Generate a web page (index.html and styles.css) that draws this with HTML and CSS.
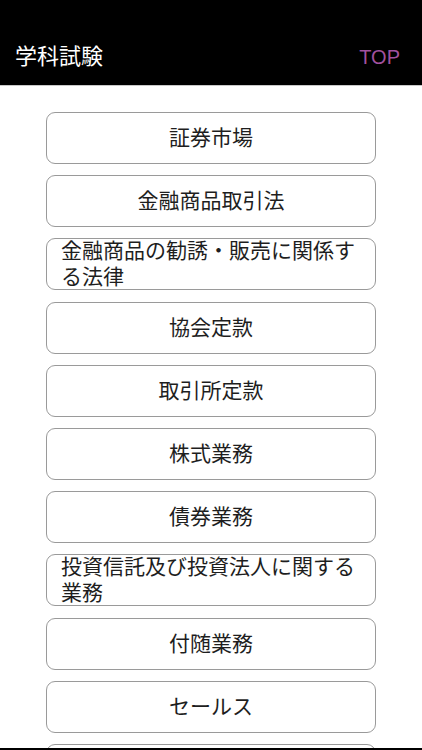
FILE: index.html
```html
<!DOCTYPE html>
<html lang="ja">
<head>
<meta charset="utf-8">
<title>学科試験</title>
<link rel="stylesheet" href="styles.css">
</head>
<body>
<header class="nav">
  <h1 class="nav-title">学科試験</h1>
  <a class="nav-top" href="#">TOP</a>
</header>
<main class="list">
  <button class="item"><span>証券市場</span></button>
  <button class="item"><span>金融商品取引法</span></button>
  <button class="item"><span>金融商品の勧誘・販売に関係する法律</span></button>
  <button class="item"><span>協会定款</span></button>
  <button class="item"><span>取引所定款</span></button>
  <button class="item"><span>株式業務</span></button>
  <button class="item"><span>債券業務</span></button>
  <button class="item"><span>投資信託及び投資法人に関する業務</span></button>
  <button class="item"><span>付随業務</span></button>
  <button class="item"><span>セールス</span></button>
  <button class="item" aria-label="次の項目"></button>
</main>
<div class="bottom-bar"></div>
</body>
</html>
```

FILE: styles.css
```css
html, body {
  margin: 0;
  padding: 0;
  background: #ffffff;
  font-family: "Noto Sans CJK JP", "Noto Sans", sans-serif;
}

body {
  height: 750px;
  overflow: hidden;
}

.nav {
  box-sizing: border-box;
  height: 86px;
  background: #000000;
  border-bottom: 1px solid #c8c8c8;
  display: flex;
  align-items: center;
  justify-content: space-between;
  padding: 28px 22px 0 15px;
}

.nav-title {
  margin: 0 0 5px 0;
  color: #ffffff;
  font-size: 22px;
  font-weight: normal;
  line-height: 28px;
  letter-spacing: 0;
}

.nav-top {
  color: #a2519e;
  text-decoration: none;
  font-family: "Liberation Sans", "Noto Sans", sans-serif;
  font-size: 20px;
  line-height: 28px;
}

.list {
  display: flex;
  flex-direction: column;
  gap: 11.2px;
  padding: 26px 46px 0 46px;
}

.item {
  box-sizing: border-box;
  flex: 0 0 auto;
  height: 52px;
  width: 330px;
  margin: 0;
  padding: 0 14px 4px 14px;
  background: #ffffff;
  border: 1.5px solid #9a9a9a;
  border-radius: 9px;
  display: flex;
  align-items: center;
  justify-content: center;
  font-family: "Noto Sans CJK JP", "Noto Sans", sans-serif;
  font-size: 21px;
  line-height: 26px;
  color: #1e1e1e;
  overflow: visible;
}

.item span {
  display: block;
  text-align: left;
}

.bottom-bar {
  position: fixed;
  left: 0;
  right: 0;
  bottom: 0;
  height: 2px;
  background: #000000;
}
```
